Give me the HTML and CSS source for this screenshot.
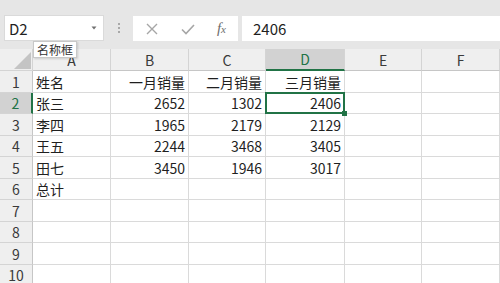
FILE: index.html
```html
<!DOCTYPE html>
<html lang="zh">
<head>
<meta charset="utf-8">
<link rel="stylesheet" href="styles.css">
</head>
<body>
<div class="app">
  <div class="toolbar">
    <div class="namebox">
      <span class="nb-text">D2</span>
      <svg class="nb-arrow" width="6" height="4" viewBox="0 0 6 4"><path d="M0.5 0.5 L5.5 0.5 L3 3.5 Z" fill="#707070"/></svg>
    </div>
    <div class="grip">
      <span></span><span></span><span></span>
    </div>
    <div class="fbuttons">
      <svg class="ic" width="14" height="14" viewBox="0 0 14 14"><path d="M2 2 L12 12 M12 2 L2 12" stroke="#a6a6a6" stroke-width="1.4" fill="none"/></svg>
      <svg class="ic" width="16" height="14" viewBox="0 0 16 14"><path d="M2 7.5 L6 11.5 L14 3" stroke="#a6a6a6" stroke-width="1.6" fill="none"/></svg>
      <span class="fx">f<span class="fxx">x</span></span>
    </div>
    <div class="finput">2406</div>
  </div>
  <div class="grid">
    <div class="hd corner"><svg class="tri" width="17" height="17" viewBox="0 0 17 17"><path d="M17 0 L17 17 L0 17 Z" fill="#c4c4c4"/></svg></div>
    <div class="hd col">A</div>
    <div class="hd col">B</div>
    <div class="hd col">C</div>
    <div class="hd col active-col">D</div>
    <div class="hd col">E</div>
    <div class="hd col">F</div>

    <div class="hd row">1</div>
    <div class="c">姓名</div><div class="c n">一月销量</div><div class="c n">二月销量</div><div class="c n">三月销量</div><div class="c"></div><div class="c"></div>

    <div class="hd row active-row">2</div>
    <div class="c">张三</div><div class="c n">2652</div><div class="c n">1302</div><div class="c n sel">2406</div><div class="c"></div><div class="c"></div>

    <div class="hd row">3</div>
    <div class="c">李四</div><div class="c n">1965</div><div class="c n">2179</div><div class="c n">2129</div><div class="c"></div><div class="c"></div>

    <div class="hd row">4</div>
    <div class="c">王五</div><div class="c n">2244</div><div class="c n">3468</div><div class="c n">3405</div><div class="c"></div><div class="c"></div>

    <div class="hd row">5</div>
    <div class="c">田七</div><div class="c n">3450</div><div class="c n">1946</div><div class="c n">3017</div><div class="c"></div><div class="c"></div>

    <div class="hd row">6</div>
    <div class="c">总计</div><div class="c"></div><div class="c"></div><div class="c"></div><div class="c"></div><div class="c"></div>

    <div class="hd row">7</div>
    <div class="c"></div><div class="c"></div><div class="c"></div><div class="c"></div><div class="c"></div><div class="c"></div>

    <div class="hd row">8</div>
    <div class="c"></div><div class="c"></div><div class="c"></div><div class="c"></div><div class="c"></div><div class="c"></div>

    <div class="hd row">9</div>
    <div class="c"></div><div class="c"></div><div class="c"></div><div class="c"></div><div class="c"></div><div class="c"></div>

    <div class="hd row">10</div>
    <div class="c"></div><div class="c"></div><div class="c"></div><div class="c"></div><div class="c"></div><div class="c"></div>
  </div>
  <div class="tooltip">名称框</div>
</div>
</body>
</html>
```

FILE: styles.css
```css
* { box-sizing: border-box; }
html, body {
  margin: 0;
  padding: 0;
  width: 500px;
  height: 283px;
  overflow: hidden;
  background: #ffffff;
  font-family: "Noto Sans CJK SC", "Noto Sans", sans-serif;
  color: #1f1f1f;
}
.app {
  position: relative;
  width: 500px;
  height: 283px;
  overflow: hidden;
}
.toolbar {
  height: 49px;
  background: #e6e6e6;
  display: flex;
  align-items: flex-start;
  padding-top: 15px;
  padding-left: 4px;
}
.namebox {
  width: 100px;
  height: 26px;
  background: #ffffff;
  border: 1px solid #dadada;
  display: flex;
  align-items: center;
  justify-content: space-between;
  padding: 0 6px 0 4px;
}
.nb-text {
  font-size: 15px;
  line-height: 1;
  color: #1f1f1f;
}
.nb-arrow { display: block; }
.grip {
  width: 29px;
  height: 26px;
  display: flex;
  flex-direction: column;
  align-items: center;
  justify-content: center;
  gap: 2px;
}
.grip span {
  width: 2px;
  height: 2px;
  background: #a8a8a8;
  display: block;
}
.fbuttons {
  width: 105px;
  height: 25px;
  margin-top: 1px;
  background: #ffffff;
  display: flex;
  align-items: center;
  justify-content: space-between;
  padding: 0 12px 0 12px;
}
.ic { display: block; }
.fx {
  font-family: "Liberation Serif", "DejaVu Serif", serif;
  font-style: italic;
  font-size: 15px;
  color: #6d6d6d;
  line-height: 1;
}
.fxx { font-size: 11px; }
.finput {
  flex: 1;
  height: 25px;
  margin-top: 1px;
  margin-left: 4px;
  background: #ffffff;
  font-size: 15px;
  line-height: 25px;
  padding-left: 11px;
  color: #1f1f1f;
}
.grid {
  display: grid;
  grid-template-columns: 33px 78px 78px 77px 79px 77px 78px;
  grid-template-rows: 22px 22px 21px 22px 21px 22px 21px 22px 21px 22px 21px;
}
.hd {
  background: #efefef;
  color: #3a3a3a;
  font-size: 14px;
  display: flex;
  align-items: center;
  justify-content: center;
  line-height: 1;
}
.corner {
  position: relative;
  border-right: 1px solid #d4d4d4;
  border-bottom: 1px solid #d4d4d4;
  justify-content: flex-end;
  align-items: flex-end;
  padding: 0 1px 1px 0;
}
.tri { display: block; }
.col {
  border-right: 1px solid #d4d4d4;
  border-bottom: 1px solid #c6c6c6;
}
.active-col {
  background: #d2d2d2;
  color: #217346;
  border-bottom: 2px solid #217346;
}
.row {
  border-right: 1px solid #c6c6c6;
  border-bottom: 1px solid #d4d4d4;
}
.active-row {
  background: #d2d2d2;
  color: #217346;
  border-right: 2px solid #217346;
}
.c {
  border-right: 1px solid #dadada;
  border-bottom: 1px solid #dadada;
  font-size: 14px;
  line-height: 1;
  display: flex;
  align-items: center;
  padding: 0 3px;
  color: #1f1f1f;
  white-space: nowrap;
}
.n { justify-content: flex-end; }
.sel { position: relative; }
.sel::after {
  content: "";
  position: absolute;
  left: -1px;
  top: -1px;
  right: -1px;
  bottom: -1px;
  border: 2px solid #217346;
}
.sel::before {
  content: "";
  position: absolute;
  right: -3px;
  bottom: -3px;
  width: 5px;
  height: 5px;
  background: #217346;
  z-index: 2;
}
.tooltip {
  position: absolute;
  left: 33px;
  top: 41px;
  height: 17px;
  padding: 0 3px;
  background: #ffffff;
  border: 1px solid #c8c8c8;
  box-shadow: 1px 1px 2px rgba(0,0,0,0.15);
  font-size: 12px;
  line-height: 15px;
  color: #333333;
}
```
